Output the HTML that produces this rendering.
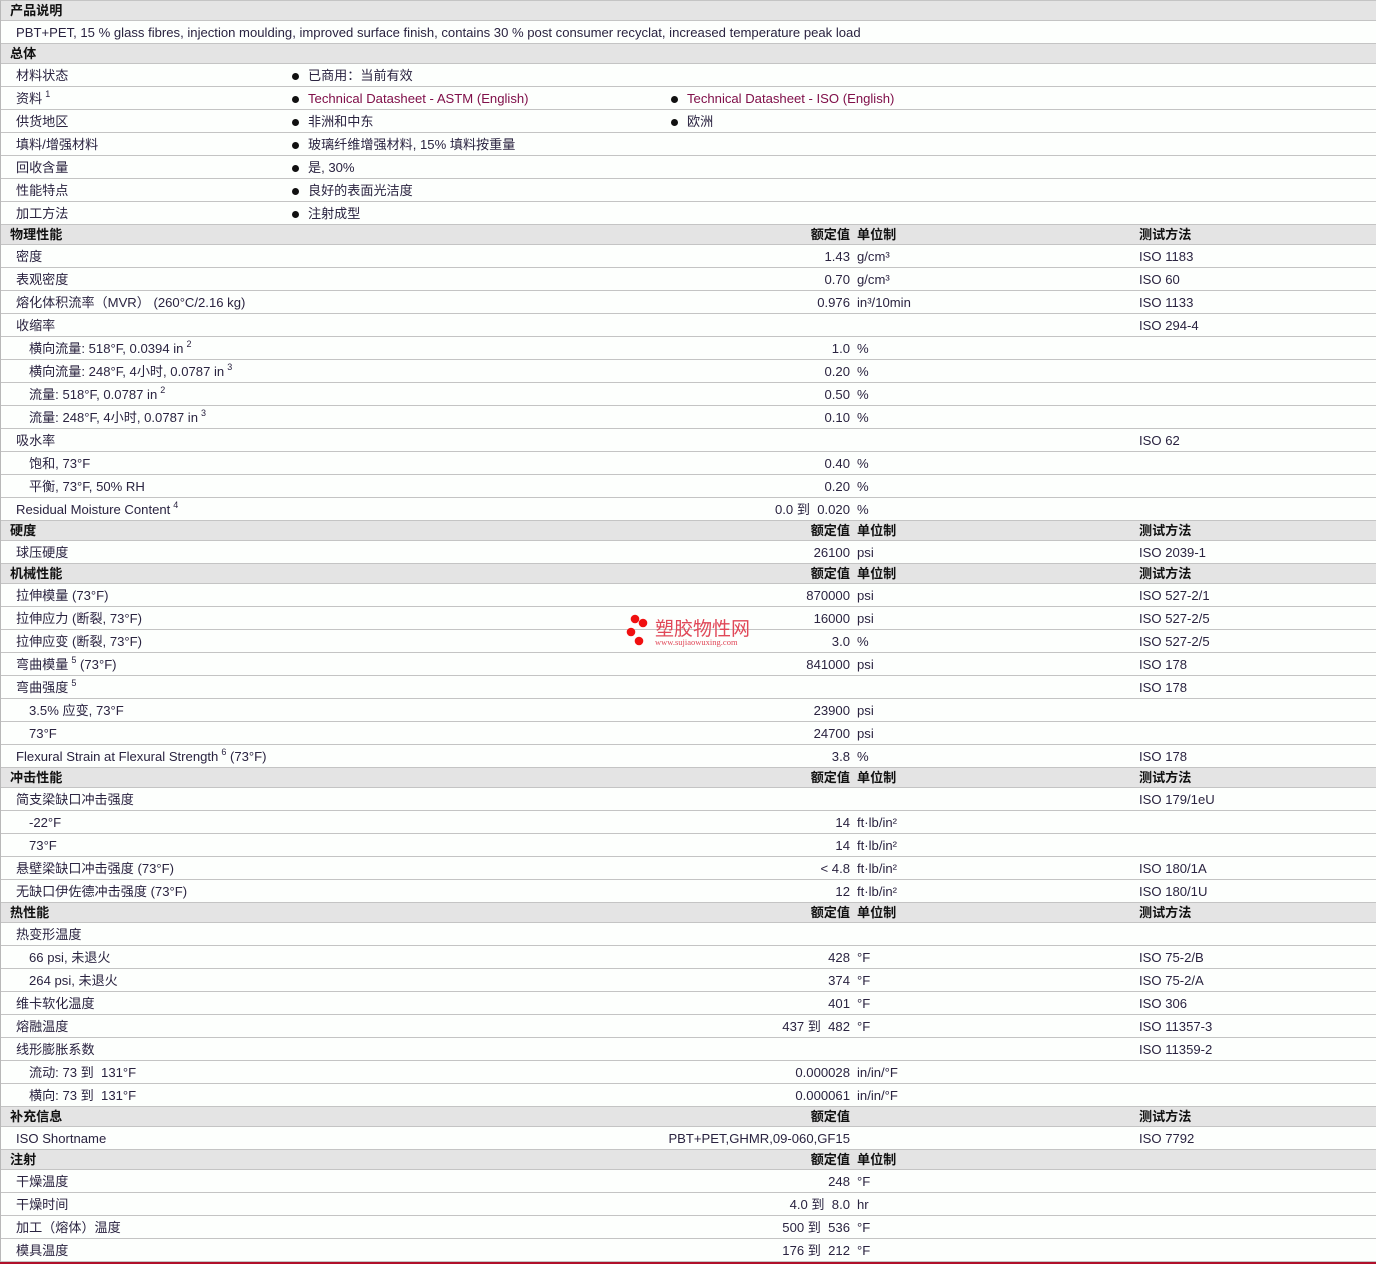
<!DOCTYPE html>
<html><head><meta charset="utf-8">
<style>
*{margin:0;padding:0;box-sizing:border-box}
body{width:1376px;height:1264px;overflow:hidden;background:#fdfffd;font-family:"Liberation Sans","Noto Sans CJK SC",sans-serif;font-size:13.1px;color:#2a2340;position:relative}
#t{position:absolute;left:0;top:0;width:1376px;border-left:1px solid #b8b8b8;border-top:1px solid #c4c4c4}
.r{position:relative;height:23px;border-bottom:1px solid #c4c4c4;white-space:nowrap}
.h{height:20px;background:#e4e4e4;font-weight:bold;color:#111}
.r span{position:absolute;top:4px;line-height:15px}
.h span{top:2px}
.l{left:15px}.h .l{left:9px}
.i{left:28px}
.b{left:291px}.b2{left:670px}
.b:before,.b2:before{content:"";position:absolute;left:0;top:5px;width:7px;height:7px;border-radius:50%;background:#111}
.b i,.b2 i{font-style:normal;margin-left:16px}
.v{right:526px;text-align:right}
.u{left:856px}
.m{left:1138px}
.lk{color:#80104a}
sup{font-size:9px;line-height:0;vertical-align:6px;margin-left:3px}
#red{position:absolute;left:0;top:1262px;width:1376px;height:2px;background:#b0102a}
</style></head><body>
<div id="t">
<div class="r h"><span class="l">产品说明</span></div>
<div class="r"><span class="l">PBT+PET, 15 % glass fibres, injection moulding, improved surface finish, contains 30 % post consumer recyclat, increased temperature peak load</span></div>
<div class="r h"><span class="l">总体</span></div>
<div class="r"><span class="l">材料状态</span><span class="b"><i>已商用：当前有效</i></span></div>
<div class="r"><span class="l">资料<sup>1</sup></span><span class="b"><i class="lk">Technical Datasheet - ASTM (English)</i></span><span class="b2"><i class="lk">Technical Datasheet - ISO (English)</i></span></div>
<div class="r"><span class="l">供货地区</span><span class="b"><i>非洲和中东</i></span><span class="b2"><i>欧洲</i></span></div>
<div class="r"><span class="l">填料/增强材料</span><span class="b"><i>玻璃纤维增强材料, 15% 填料按重量</i></span></div>
<div class="r"><span class="l">回收含量</span><span class="b"><i>是, 30%</i></span></div>
<div class="r"><span class="l">性能特点</span><span class="b"><i>良好的表面光洁度</i></span></div>
<div class="r"><span class="l">加工方法</span><span class="b"><i>注射成型</i></span></div>
<div class="r h"><span class="l">物理性能</span><span class="v">额定值</span><span class="u">单位制</span><span class="m">测试方法</span></div>
<div class="r"><span class="l">密度</span><span class="v">1.43</span><span class="u">g/cm³</span><span class="m">ISO 1183</span></div>
<div class="r"><span class="l">表观密度</span><span class="v">0.70</span><span class="u">g/cm³</span><span class="m">ISO 60</span></div>
<div class="r"><span class="l">熔化体积流率（MVR） (260°C/2.16 kg)</span><span class="v">0.976</span><span class="u">in³/10min</span><span class="m">ISO 1133</span></div>
<div class="r"><span class="l">收缩率</span><span class="m">ISO 294-4</span></div>
<div class="r"><span class="i">横向流量: 518°F, 0.0394 in<sup>2</sup></span><span class="v">1.0</span><span class="u">%</span></div>
<div class="r"><span class="i">横向流量: 248°F, 4小时, 0.0787 in<sup>3</sup></span><span class="v">0.20</span><span class="u">%</span></div>
<div class="r"><span class="i">流量: 518°F, 0.0787 in<sup>2</sup></span><span class="v">0.50</span><span class="u">%</span></div>
<div class="r"><span class="i">流量: 248°F, 4小时, 0.0787 in<sup>3</sup></span><span class="v">0.10</span><span class="u">%</span></div>
<div class="r"><span class="l">吸水率</span><span class="m">ISO 62</span></div>
<div class="r"><span class="i">饱和, 73°F</span><span class="v">0.40</span><span class="u">%</span></div>
<div class="r"><span class="i">平衡, 73°F, 50% RH</span><span class="v">0.20</span><span class="u">%</span></div>
<div class="r"><span class="l">Residual Moisture Content<sup>4</sup></span><span class="v">0.0 到 &nbsp;0.020</span><span class="u">%</span></div>
<div class="r h"><span class="l">硬度</span><span class="v">额定值</span><span class="u">单位制</span><span class="m">测试方法</span></div>
<div class="r"><span class="l">球压硬度</span><span class="v">26100</span><span class="u">psi</span><span class="m">ISO 2039-1</span></div>
<div class="r h"><span class="l">机械性能</span><span class="v">额定值</span><span class="u">单位制</span><span class="m">测试方法</span></div>
<div class="r"><span class="l">拉伸模量 (73°F)</span><span class="v">870000</span><span class="u">psi</span><span class="m">ISO 527-2/1</span></div>
<div class="r"><span class="l">拉伸应力 (断裂, 73°F)</span><span class="v">16000</span><span class="u">psi</span><span class="m">ISO 527-2/5</span></div>
<div class="r"><span class="l">拉伸应变 (断裂, 73°F)</span><span class="v">3.0</span><span class="u">%</span><span class="m">ISO 527-2/5</span></div>
<div class="r"><span class="l">弯曲模量<sup>5</sup> (73°F)</span><span class="v">841000</span><span class="u">psi</span><span class="m">ISO 178</span></div>
<div class="r"><span class="l">弯曲强度<sup>5</sup></span><span class="m">ISO 178</span></div>
<div class="r"><span class="i">3.5% 应变, 73°F</span><span class="v">23900</span><span class="u">psi</span></div>
<div class="r"><span class="i">73°F</span><span class="v">24700</span><span class="u">psi</span></div>
<div class="r"><span class="l">Flexural Strain at Flexural Strength<sup>6</sup> (73°F)</span><span class="v">3.8</span><span class="u">%</span><span class="m">ISO 178</span></div>
<div class="r h"><span class="l">冲击性能</span><span class="v">额定值</span><span class="u">单位制</span><span class="m">测试方法</span></div>
<div class="r"><span class="l">简支梁缺口冲击强度</span><span class="m">ISO 179/1eU</span></div>
<div class="r"><span class="i">-22°F</span><span class="v">14</span><span class="u">ft·lb/in²</span></div>
<div class="r"><span class="i">73°F</span><span class="v">14</span><span class="u">ft·lb/in²</span></div>
<div class="r"><span class="l">悬壁梁缺口冲击强度 (73°F)</span><span class="v">&lt; 4.8</span><span class="u">ft·lb/in²</span><span class="m">ISO 180/1A</span></div>
<div class="r"><span class="l">无缺口伊佐德冲击强度 (73°F)</span><span class="v">12</span><span class="u">ft·lb/in²</span><span class="m">ISO 180/1U</span></div>
<div class="r h"><span class="l">热性能</span><span class="v">额定值</span><span class="u">单位制</span><span class="m">测试方法</span></div>
<div class="r"><span class="l">热变形温度</span></div>
<div class="r"><span class="i">66 psi, 未退火</span><span class="v">428</span><span class="u">°F</span><span class="m">ISO 75-2/B</span></div>
<div class="r"><span class="i">264 psi, 未退火</span><span class="v">374</span><span class="u">°F</span><span class="m">ISO 75-2/A</span></div>
<div class="r"><span class="l">维卡软化温度</span><span class="v">401</span><span class="u">°F</span><span class="m">ISO 306</span></div>
<div class="r"><span class="l">熔融温度</span><span class="v">437 到 &nbsp;482</span><span class="u">°F</span><span class="m">ISO 11357-3</span></div>
<div class="r"><span class="l">线形膨胀系数</span><span class="m">ISO 11359-2</span></div>
<div class="r"><span class="i">流动: 73 到 &nbsp;131°F</span><span class="v">0.000028</span><span class="u">in/in/°F</span></div>
<div class="r"><span class="i">横向: 73 到 &nbsp;131°F</span><span class="v">0.000061</span><span class="u">in/in/°F</span></div>
<div class="r h"><span class="l">补充信息</span><span class="v">额定值</span><span class="m">测试方法</span></div>
<div class="r"><span class="l">ISO Shortname</span><span class="v">PBT+PET,GHMR,09-060,GF15</span><span class="m">ISO 7792</span></div>
<div class="r h"><span class="l">注射</span><span class="v">额定值</span><span class="u">单位制</span></div>
<div class="r"><span class="l">干燥温度</span><span class="v">248</span><span class="u">°F</span></div>
<div class="r"><span class="l">干燥时间</span><span class="v">4.0 到 &nbsp;8.0</span><span class="u">hr</span></div>
<div class="r"><span class="l">加工（熔体）温度</span><span class="v">500 到 &nbsp;536</span><span class="u">°F</span></div>
<div class="r"><span class="l">模具温度</span><span class="v">176 到 &nbsp;212</span><span class="u">°F</span></div>
</div>
<div id="red"></div>
<svg style="position:absolute;left:620px;top:610px" width="150" height="40">
<circle cx="15" cy="9" r="4.3" fill="#f01010"/><circle cx="23" cy="13" r="4.3" fill="#f01010"/>
<circle cx="11" cy="22" r="4.3" fill="#f01010"/><circle cx="19" cy="31" r="4.3" fill="#f01010"/>
<text x="35" y="25" font-family="Noto Sans CJK SC,sans-serif" font-size="19" fill="#e04858">塑胶物性网</text>
<text x="35" y="35" font-family="Liberation Serif,serif" font-size="8.5" fill="#e04858">www.sujiaowuxing.com</text>
</svg>
</body></html>
